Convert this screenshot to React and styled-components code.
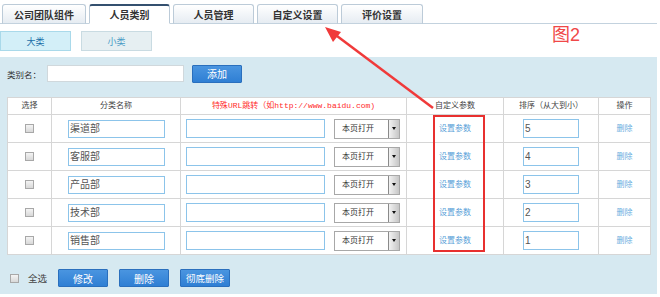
import React from 'react';
import styled, { createGlobalStyle } from 'styled-components';

const GlobalStyle = createGlobalStyle`
  html, body {
    margin: 0;
    padding: 0;
    background: #fff;
  }
  body {
    font-family: "Liberation Sans", "Noto Sans CJK SC", sans-serif;
    color: #333;
  }
`;

const Page = styled.div`
  position: relative;
  width: 657px;
  height: 297px;
`;

const TabBar = styled.div`
  display: flex;
  align-items: flex-end;
  gap: 3px;
  height: 23px;
  padding-left: 2px;
  border-bottom: 1px solid #c3d2de;
`;

const Tab = styled.div`
  box-sizing: border-box;
  width: ${(p) => p.$w}px;
  height: 20px;
  margin-bottom: -1px;
  display: flex;
  align-items: center;
  justify-content: center;
  font-size: 10px;
  font-weight: bold;
  color: #333;
  border: 1px solid #bccbd8;
  border-bottom: ${(p) => (p.$active ? '1px solid #fff' : '1px solid #c3d2de')};
  border-top: ${(p) => (p.$active ? '2px solid #34506f' : '1px solid #bccbd8')};
  border-radius: 3px 3px 0 0;
  background: ${(p) =>
    p.$active ? '#fff' : 'linear-gradient(#ffffff, #e6ecf2)'};
`;

const SubBar = styled.div`
  display: flex;
  align-items: flex-start;
  gap: 10px;
  height: 33px;
  box-sizing: border-box;
  padding-top: 7px;
`;

const SubTab = styled.div`
  box-sizing: border-box;
  width: 71px;
  height: 20px;
  display: flex;
  align-items: center;
  justify-content: center;
  font-size: 9px;
  color: ${(p) => (p.$active ? '#1b6fa8' : '#4a9cc6')};
  background: ${(p) => (p.$active ? '#d3eff8' : '#e6eff2')};
  border: 1px solid ${(p) => (p.$active ? '#a9d9ea' : '#c9dbe2')};
`;

const FigLabel = styled.div`
  margin-left: 390px;
  margin-top: -7px;
  font-size: 18px;
  line-height: 22px;
  color: #f04848;
`;

const Panel = styled.div`
  box-sizing: border-box;
  height: 237px;
  background: #d6e9f1;
  padding: 8px 7px 0 7px;
`;

const FormRow = styled.div`
  display: flex;
  align-items: center;
  height: 17px;
`;

const Label = styled.span`
  width: 40px;
  font-size: 8.5px;
  color: #333;
`;

const TextBox = styled.div`
  box-sizing: border-box;
  width: ${(p) => p.$w}px;
  height: ${(p) => p.$h || 18}px;
  background: #fff;
  border: 1px solid ${(p) => p.$border || '#8cc4ea'};
  font-size: 10px;
  line-height: ${(p) => (p.$h || 18) - 2}px;
  color: #555;
  padding-left: 1px;
  text-align: left;
  margin: ${(p) => (p.$center ? '0 auto' : '0')};
`;

const BlueButton = styled.div`
  box-sizing: border-box;
  width: 50px;
  height: 18px;
  display: flex;
  align-items: center;
  justify-content: center;
  font-size: ${(p) => p.$fs || 10}px;
  color: #fff;
  background: linear-gradient(#4a95e0, #2f7fd4);
  border: 1px solid #2a6fbd;
  border-radius: 1px;
`;

const Gap = styled.div`
  width: 8px;
`;

const Table = styled.table`
  margin-top: 15px;
  width: 643px;
  border-collapse: collapse;
  background: #fff;
  table-layout: fixed;
`;

const Th = styled.th`
  height: 16px;
  padding: 0;
  border: 1px solid #d6d6d6;
  font-size: 8px;
  line-height: 1;
  font-weight: normal;
  color: ${(p) => p.$color || '#444'};
  text-align: center;
  white-space: nowrap;
`;

const Mono = styled.span`
  font-family: "Liberation Mono", "DejaVu Sans Mono", monospace;
  font-size: 8px;
`;

const Td = styled.td`
  height: 27px;
  padding: 0 0 0 ${(p) => p.$pl || 0}px;
  border: 1px solid #d6d6d6;
  font-size: 8px;
  line-height: 1;
  text-align: ${(p) => (p.$pl ? 'left' : 'center')};
  vertical-align: middle;
`;

const CellRow = styled.div`
  display: flex;
  align-items: center;
  gap: 9px;
`;

const Check = styled.span`
  display: inline-block;
  box-sizing: border-box;
  width: 9px;
  height: 9px;
  border: 1px solid #a8a8a8;
  background: linear-gradient(#f4f4f4, #d8d8d8);
  vertical-align: middle;
`;

const Select = styled.div`
  box-sizing: border-box;
  width: 66px;
  height: 20px;
  display: flex;
  align-items: center;
  background: #fff;
  border: 1px solid #a8a8a8;
  font-size: 8px;
  color: #333;
`;

const SelectText = styled.span`
  flex: 1;
  padding-left: 7px;
`;

const SelectArrow = styled.span`
  box-sizing: border-box;
  width: 11px;
  height: 18px;
  display: flex;
  align-items: center;
  justify-content: center;
  border-left: 1px solid #8a8a8a;
  background: linear-gradient(90deg, #f2f2f2, #c6c6c6);

  &::after {
    content: '';
    border-left: 2.5px solid transparent;
    border-right: 2.5px solid transparent;
    border-top: 3px solid #111;
  }
`;

const Link = styled.span`
  font-size: 8px;
  color: ${(p) => p.$color || '#5a9fd8'};
`;

const Footer = styled.div`
  display: flex;
  align-items: center;
  margin-top: 14px;
  padding-left: 3px;
`;

const FooterLabel = styled.span`
  font-size: 9.5px;
  color: #444;
  margin: 0 11px 0 9px;
`;

const ButtonGroup = styled.div`
  display: flex;
  gap: 11px;
`;

const Overlay = styled.svg`
  position: absolute;
  left: 0;
  top: 0;
  pointer-events: none;
`;

const tabs = [
  { name: '公司团队组件', w: 84 },
  { name: '人员类别', w: 81, active: true },
  { name: '人员管理', w: 81 },
  { name: '自定义设置', w: 81 },
  { name: '评价设置', w: 82 },
];

const rows = [
  { name: '渠道部', sort: '5' },
  { name: '客服部', sort: '4' },
  { name: '产品部', sort: '3' },
  { name: '技术部', sort: '2' },
  { name: '销售部', sort: '1' },
];

export default function App() {
  return (
    <Page>
      <GlobalStyle />
      <TabBar>
        {tabs.map((t) => (
          <Tab key={t.name} $w={t.w} $active={t.active}>
            {t.name}
          </Tab>
        ))}
      </TabBar>
      <SubBar>
        <SubTab $active>大类</SubTab>
        <SubTab>小类</SubTab>
        <FigLabel>图2</FigLabel>
      </SubBar>
      <Panel>
        <FormRow>
          <Label>类别名：</Label>
          <TextBox $w={137} $h={17} $border="#d0d8dc" />
          <Gap />
          <BlueButton>添加</BlueButton>
        </FormRow>
        <Table>
          <colgroup>
            <col style={{ width: 44 }} />
            <col style={{ width: 129 }} />
            <col style={{ width: 226 }} />
            <col style={{ width: 97 }} />
            <col style={{ width: 95 }} />
            <col style={{ width: 52 }} />
          </colgroup>
          <thead>
            <tr>
              <Th>选择</Th>
              <Th>分类名称</Th>
              <Th $color="#ff2a2a">
                特殊<Mono>URL</Mono>跳转（如<Mono>http://www.baidu.com)</Mono>
              </Th>
              <Th>自定义参数</Th>
              <Th>排序（从大到小）</Th>
              <Th>操作</Th>
            </tr>
          </thead>
          <tbody>
            {rows.map((r) => (
              <tr key={r.name}>
                <Td>
                  <Check />
                </Td>
                <Td $pl={16}>
                  <TextBox $w={97}>{r.name}</TextBox>
                </Td>
                <Td $pl={5}>
                  <CellRow>
                    <TextBox $w={139} $h={19} />
                    <Select>
                      <SelectText>本页打开</SelectText>
                      <SelectArrow />
                    </Select>
                  </CellRow>
                </Td>
                <Td>
                  <Link>设置参数</Link>
                </Td>
                <Td>
                  <TextBox $w={56} $h={19} $center>
                    {r.sort}
                  </TextBox>
                </Td>
                <Td>
                  <Link $color="#6aaee0">删除</Link>
                </Td>
              </tr>
            ))}
          </tbody>
        </Table>
        <Footer>
          <Check />
          <FooterLabel>全选</FooterLabel>
          <ButtonGroup>
            <BlueButton>修改</BlueButton>
            <BlueButton>删除</BlueButton>
            <BlueButton $fs={9.5}>彻底删除</BlueButton>
          </ButtonGroup>
        </Footer>
      </Panel>
      <Overlay width="660" height="297" viewBox="0 0 660 297">
        <rect x="434" y="116" width="50" height="135" fill="none" stroke="#e8302f" strokeWidth="2" />
        <line x1="433" y1="108" x2="337" y2="36" stroke="#f03a3a" strokeWidth="2.5" />
        <polygon points="325,27 341,32 333,42" fill="#f03a3a" />
      </Overlay>
    </Page>
  );
}
